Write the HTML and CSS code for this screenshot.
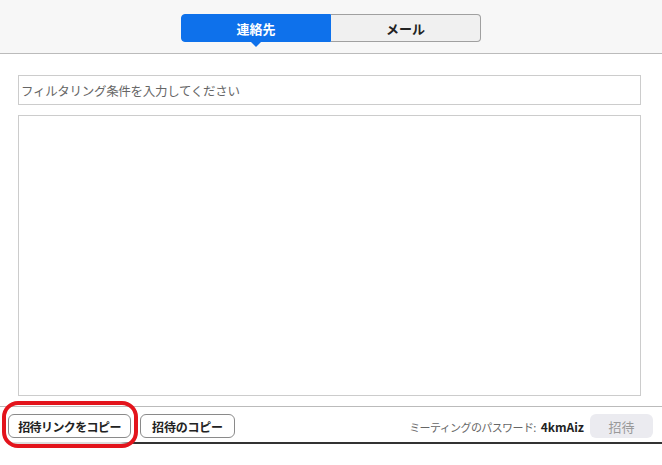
FILE: index.html
```html
<!DOCTYPE html>
<html lang="ja">
<head>
    <meta charset="UTF-8">
    <title>招待</title>
    <link rel="stylesheet" href="styles.css">
</head>
<body>
    <!-- タブ -->
    <header class="tab-bar">
        <div class="tabs">
            <button class="tab active">連絡先</button>
            <button class="tab">メール</button>
        </div>
    </header>

    <!-- 連絡先リスト -->
    <main class="content">
        <input class="filter" type="text" placeholder="フィルタリング条件を入力してください">
        <div class="contact-list"></div>
    </main>

    <!-- 下部ボタン -->
    <footer class="footer">
        <div class="footer-left">
            <button class="copy-btn link">招待リンクをコピー</button>
            <button class="copy-btn">招待のコピー</button>
        </div>
        <div class="footer-right">
            <span class="password">ミーティングのパスワード: <b>4kmAiz</b></span>
            <button class="invite-btn" disabled>招待</button>
        </div>
        <div class="highlight"></div>
    </footer>
    <div class="bottom-line"></div>
</body>
</html>
```

FILE: styles.css
```css
* {
    margin: 0;
    padding: 0;
    box-sizing: border-box;
}

body {
    font-family: "Noto Sans CJK JP", "Noto Sans", sans-serif;
    font-size: 13px;
    color: #222;
    background-color: #fff;
    width: 662px;
    height: 465px;
    overflow: hidden;
}

button {
    font-family: inherit;
}

/* タブ */
.tab-bar {
    height: 54px;
    background-color: #f7f7f7;
    border-bottom: 1px solid #bbb;
    display: flex;
    justify-content: center;
    padding-top: 14px;
}

.tabs {
    display: flex;
    height: 28px;
}

.tab {
    width: 150px;
    height: 28px;
    font-size: 13px;
    font-weight: bold;
    color: #222;
    background-color: #f0f0f0;
    border: 1px solid #a0a0a0;
    border-left: none;
    border-radius: 0 4px 4px 0;
    position: relative;
}

.tab.active {
    color: #fff;
    background-color: #0e71eb;
    border: 1px solid #0e71eb;
    border-radius: 4px 0 0 4px;
}

.tab.active::after {
    content: "";
    position: absolute;
    left: 50%;
    bottom: -6px;
    margin-left: -6px;
    border-left: 6px solid transparent;
    border-right: 6px solid transparent;
    border-top: 6px solid #0e71eb;
}

/* 連絡先リスト */
.content {
    padding: 21px 21px 0 18px;
    display: flex;
    flex-direction: column;
    gap: 10px;
}

.filter {
    height: 30px;
    border: 1px solid #ccc;
    padding: 0 2px;
    font-family: inherit;
    font-size: 12.5px;
    letter-spacing: -0.3px;
    outline: none;
}

.filter::placeholder {
    color: #666;
}

.contact-list {
    height: 281px;
    border: 1px solid #ccc;
}

/* 下部 */
.footer {
    position: relative;
    margin-top: 10px;
    border-top: 1px solid #bbb;
    padding: 7px 9px 4px 8px;
    display: flex;
    justify-content: space-between;
    align-items: center;
}

.footer-left {
    display: flex;
    gap: 9px;
}

.copy-btn {
    width: 95px;
    height: 24px;
    font-size: 12px;
    font-weight: bold;
    letter-spacing: -0.2px;
    color: #222;
    background-color: #fff;
    border: 1px solid #8a8a8a;
    border-radius: 6px;
}

.copy-btn.link {
    width: 123px;
    letter-spacing: -0.6px;
}

.footer-right {
    display: flex;
    align-items: center;
    gap: 6px;
}

.password {
    color: #666;
    font-size: 11px;
    letter-spacing: -0.6px;
}

.password b {
    margin-left: 3px;
    color: #222;
    font-size: 12px;
    letter-spacing: 0;
}

.invite-btn {
    width: 63px;
    height: 24px;
    font-size: 13px;
    color: #999;
    background-color: #ebebf0;
    border: none;
    border-radius: 6px;
}

.highlight {
    position: absolute;
    left: 2px;
    top: -6px;
    width: 136px;
    height: 47px;
    border: 4px solid #e3141c;
    border-radius: 16px;
}

.bottom-line {
    height: 2px;
    margin-left: 10px;
    background: linear-gradient(to right, #ddd 0, #ddd 110px, #333 125px);
}
```
